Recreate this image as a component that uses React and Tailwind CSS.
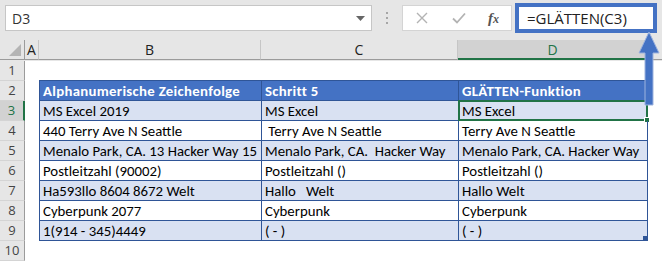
import React from "react";

const rows = [
  ["MS Excel 2019", "MS Excel", "MS Excel"],
  ["440 Terry Ave N Seattle", " Terry Ave N Seattle", "Terry Ave N Seattle"],
  ["Menalo Park, CA. 13 Hacker Way 15", "Menalo Park, CA.  Hacker Way", "Menalo Park, CA. Hacker Way"],
  ["Postleitzahl (90002)", "Postleitzahl ()", "Postleitzahl ()"],
  ["Ha593llo 8604 8672 Welt", "Hallo   Welt", "Hallo Welt"],
  ["Cyberpunk 2077", "Cyberpunk", "Cyberpunk"],
  ["1(914 - 345)4449", "( - )", "( - )"],
];

const uiFont = { fontFamily: '"Segoe UI", "Open Sans", "Noto Sans", sans-serif' };
const cellFont = { fontFamily: 'Calibri, Carlito, Lato, "Liberation Sans", sans-serif' };

function RowHead({ n, active }) {
  return (
    <div
      className={
        "h-[20px] flex items-center justify-center text-[13px] border-b border-[#d4d4d4] " +
        (active
          ? "bg-[#d2d2d2] text-[#217346] border-r-2 border-r-[#217346]"
          : "bg-[#e6e6e6] text-[#444] border-r border-r-[#9b9b9b]")
      }
      style={uiFont}
    >
      {n}
    </div>
  );
}

function Cell({ w, children, className = "" }) {
  return (
    <div
      className={"h-[20px] flex items-center pl-[3px] pt-[1px] border-r border-b border-[#2f5597] whitespace-pre text-[14.8px] text-black " + className}
      style={{ ...cellFont, width: w }}
    >
      {children}
    </div>
  );
}

export default function App() {
  return (
    <div className="relative w-[662px] h-[261px] overflow-hidden bg-white">
      {/* formula bar */}
      <div className="h-[40px] bg-[#e6e6e6] flex items-start pt-[3px]" style={uiFont}>
        <div className="ml-[5px] mt-[2px] w-[367px] h-[26px] bg-white border border-[#c6c6c6] flex items-center pl-[6px] pr-[6px] text-[14px] text-[#333]">
          <span className="flex-1">D3</span>
          <svg width="9" height="5" viewBox="0 0 9 5"><path d="M0 0h9L4.5 5z" fill="#666" /></svg>
        </div>
        <div className="w-[30px] h-[30px] flex flex-col items-center justify-center gap-[3px]">
          <span className="w-[2px] h-[2px] bg-[#a6a6a6]" />
          <span className="w-[2px] h-[2px] bg-[#a6a6a6]" />
          <span className="w-[2px] h-[2px] bg-[#a6a6a6]" />
        </div>
        <div className="mt-[2px] w-[110px] h-[26px] bg-white border border-[#d4d4d4] flex items-center">
          <svg className="ml-[13px]" width="12" height="12" viewBox="0 0 12 12">
            <path d="M1 1l10 10M11 1L1 11" stroke="#b3b3b3" strokeWidth="1.4" />
          </svg>
          <svg className="ml-[24px]" width="14" height="12" viewBox="0 0 14 12">
            <path d="M1 6.5l4 4L13 1.5" stroke="#b3b3b3" strokeWidth="1.8" fill="none" />
          </svg>
          <span className="ml-[22px] italic font-bold text-[15px] text-[#555] leading-none" style={{ fontFamily: '"Liberation Serif", serif' }}>
            f<span className="text-[12px]">x</span>
          </span>
        </div>
        <div className="ml-[3px] w-[142px] h-[30px] border-[4px] border-[#4472c4] bg-white flex items-center pl-[8px] text-[15px] text-[#222]">
          =GLÄTTEN(C3)
        </div>
      </div>

      {/* column headers */}
      <div className="h-[21px] flex bg-[#e6e6e6] text-[14px] text-[#222]" style={uiFont}>
        <div className="w-[25px] h-[20px] border-r border-b border-[#9b9b9b] relative">
          <svg className="absolute right-[3px] bottom-[3px]" width="12" height="12" viewBox="0 0 12 12">
            <path d="M12 0v12H0z" fill="#b4b4b4" />
          </svg>
        </div>
        <div className="w-[14px] h-[20px] border-r border-[#c6c6c6] border-b border-b-[#9b9b9b] flex items-center justify-center">A</div>
        <div className="w-[222px] h-[20px] border-r border-[#c6c6c6] border-b border-b-[#9b9b9b] flex items-center justify-center">B</div>
        <div className="w-[197px] h-[20px] border-r border-[#c6c6c6] border-b border-b-[#9b9b9b] flex items-center justify-center">C</div>
        <div className="w-[189px] h-[20px] bg-[#d2d2d2] border-b-2 border-[#217346] flex items-center justify-center text-[#217346]">D</div>
        <div className="flex-1 h-[20px] border-b border-[#9b9b9b]" />
      </div>

      {/* sheet body */}
      <div className="flex">
        <div className="w-[25px] flex flex-col">
          {[1, 2, 3, 4, 5, 6, 7, 8, 9, 10].map((n) => (
            <RowHead key={n} n={n} active={n === 3} />
          ))}
        </div>
        <div className="flex-1 flex flex-col">
          <div className="h-[19px]" />
          <div className="ml-[14px] w-fit border-l border-t border-[#2f5597]">
            <div className="flex bg-[#4472c4]">
              <Cell w={222} className="text-white font-bold tracking-[0.3px]">Alphanumerische Zeichenfolge</Cell>
              <Cell w={197} className="text-white font-bold tracking-[0.3px]">Schritt 5</Cell>
              <Cell w={189} className="text-white font-bold tracking-[0.3px]">GLÄTTEN-Funktion</Cell>
            </div>
            {rows.map((r, i) => (
              <div key={i} className={"flex " + (i % 2 === 0 ? "bg-[#d9e1f2]" : "bg-white")}>
                <Cell w={222}>{r[0]}</Cell>
                <Cell w={197}>{r[1]}</Cell>
                <Cell w={189} className="relative">
                  {r[2]}
                  {i === 0 && (
                    <span className="absolute -left-[1px] -top-[1px] -right-[1px] -bottom-[1px] border-2 border-[#217346]">
                      <span className="absolute -right-[4px] -bottom-[4px] w-[6px] h-[6px] bg-[#217346] border border-white" />
                    </span>
                  )}
                  {i === rows.length - 1 && (
                    <span className="absolute right-0 bottom-0 w-[4px] h-[4px] bg-[#2f5597]" />
                  )}
                </Cell>
              </div>
            ))}
          </div>
        </div>
      </div>

      {/* callout arrow from the formula box down to D3 */}
      <svg className="absolute left-[636px] top-[31px]" width="26" height="76" viewBox="0 0 26 76">
        <path d="M13 1L23 22H17V74H9V22H3Z" fill="#4472c4" stroke="#9db3de" strokeWidth="1" />
      </svg>
    </div>
  );
}
